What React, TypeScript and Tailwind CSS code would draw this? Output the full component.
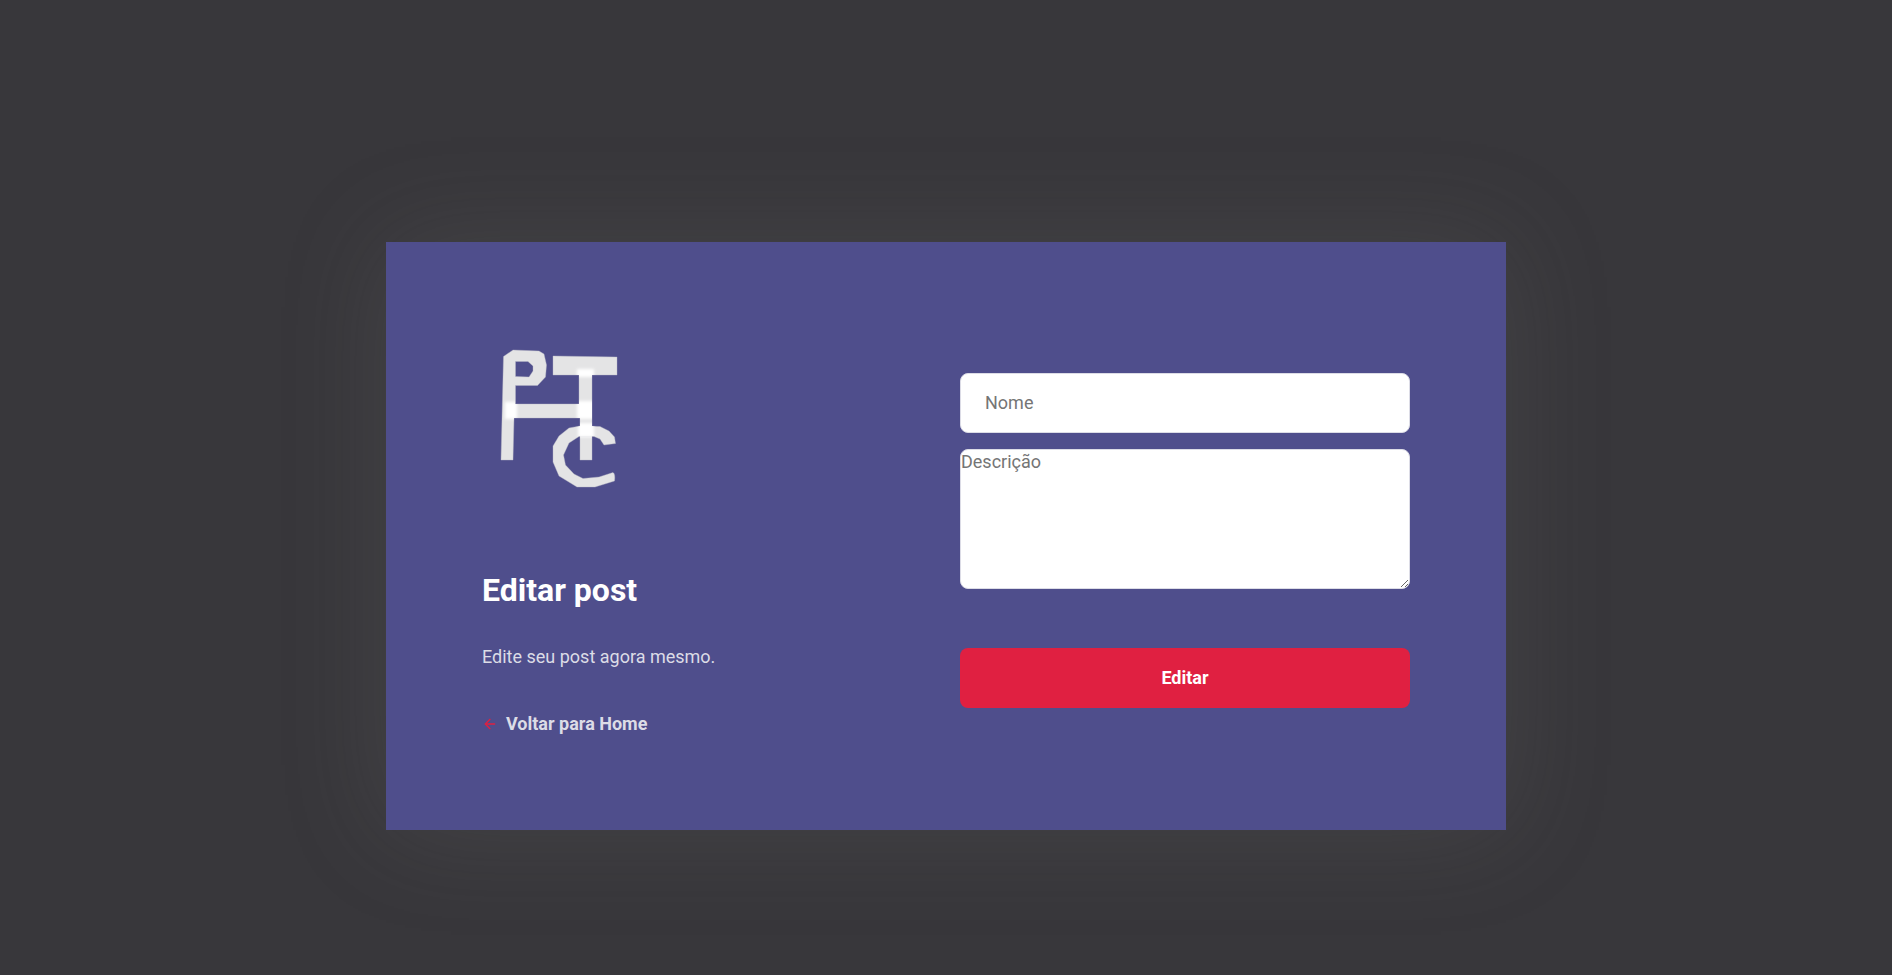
import { FiArrowLeft } from "react-icons/fi";

function Logo() {
  return (
    <svg
      role="img"
      aria-label="PHTC"
      viewBox="0 0 170 170"
      className="h-[170px] w-[170px]"
    >
      <defs>
        <filter id="soft" x="-50%" y="-50%" width="200%" height="200%">
          <feGaussianBlur stdDeviation="1.6" />
        </filter>
        <clipPath id="letters">
          <path d="M21 18 31 12 57 13 62 17 64 27 61 40 55 47 33 47V66H97V37H71V18H135V37H110V122H98V80H32L31 122H19Z" />
          <path d="M88 90 98 88 118 88 127 92 133 99V105L122 106 118 101 113 98 97 98 86 104 81 116 84 126 92 135 101 140 117 138 131 134 133 140 132 143 113 149H95L77 138 71 124V108L77 98Z" />
        </clipPath>
      </defs>
      <g fill="#e4e4e5" stroke="#b9b8c6" strokeWidth="0.4">
        <path
          fillRule="evenodd"
          d="M21.5 18.5 31 12 57 13 62 16 64.5 27 63.5 39 55.5 47.5 33.5 47.5 33.5 66H97V37H71V18L135 19V37H110V122H98V80H32L31 122H19ZM33.5 23.5V38.5L47 39 51 33V28L46 23.5Z"
        />
        <path d="M87 90 98 88 118 88.5 127 93 132.5 99 133.5 105.5 122 107 118 101 112 98.5 97 98.5 87 105 81.5 117 83.5 127 92 136 101 140.500 117 139 131 134.5Q133.5 136 132.5 143L113 149H95L77 138 71 124V108L77 98Z" />
      </g>
      <g clipPath="url(#letters)">
        <g fill="#ffffff" filter="url(#soft)">
          <rect x="23" y="64" width="12" height="17" />
          <rect x="95" y="31" width="17" height="8" />
          <rect x="95" y="63" width="17" height="18" />
          <rect x="96" y="85" width="16" height="14" />
        </g>
      </g>
    </svg>
  );
}

export default function App() {
  return (
    <div className="flex min-h-screen items-center justify-center bg-[#38373b] px-8 pt-[97px] font-['Roboto',sans-serif] text-lg">
      <main className="flex w-full max-w-[1120px] items-center justify-between gap-8 bg-[#4f4e8c] p-24 shadow-[0_0_100px_rgba(120,120,122,0.2)]">
        <section className="w-full max-w-[380px]">
          <Logo />
          <h1 className="mt-16 mb-8 text-[32px] leading-[37px] font-bold text-white">
            Editar post
          </h1>
          <p className="leading-8 text-[#dcdce6]">Edite seu post agora mesmo.</p>
          <a
            href="#home"
            className="mt-10 flex items-center gap-2 leading-[21px] font-bold text-[#dcdce6]"
          >
            <FiArrowLeft size={16} color="#e02041" aria-hidden="true" />
            Voltar para Home
          </a>
        </section>

        <form className="w-full max-w-[450px] pt-2">
          <input
            type="text"
            aria-label="Nome"
            placeholder="Nome"
            className="block h-[60px] w-full rounded-lg border border-[#dcdce6] bg-white px-6 text-[#333333] placeholder:text-[#757575]"
          />
          <textarea
            aria-label="Descrição"
            placeholder="Descrição"
            className="mt-4 block h-[140px] w-full resize rounded-lg border border-[#dcdce6] bg-white leading-[23px] text-[#333333] placeholder:text-[#757575]"
          />
          <button
            type="button"
            className="mt-[59px] block h-[60px] w-full rounded-lg bg-[#e02041] text-center font-bold text-white"
          >
            Editar
          </button>
        </form>
      </main>
    </div>
  );
}
